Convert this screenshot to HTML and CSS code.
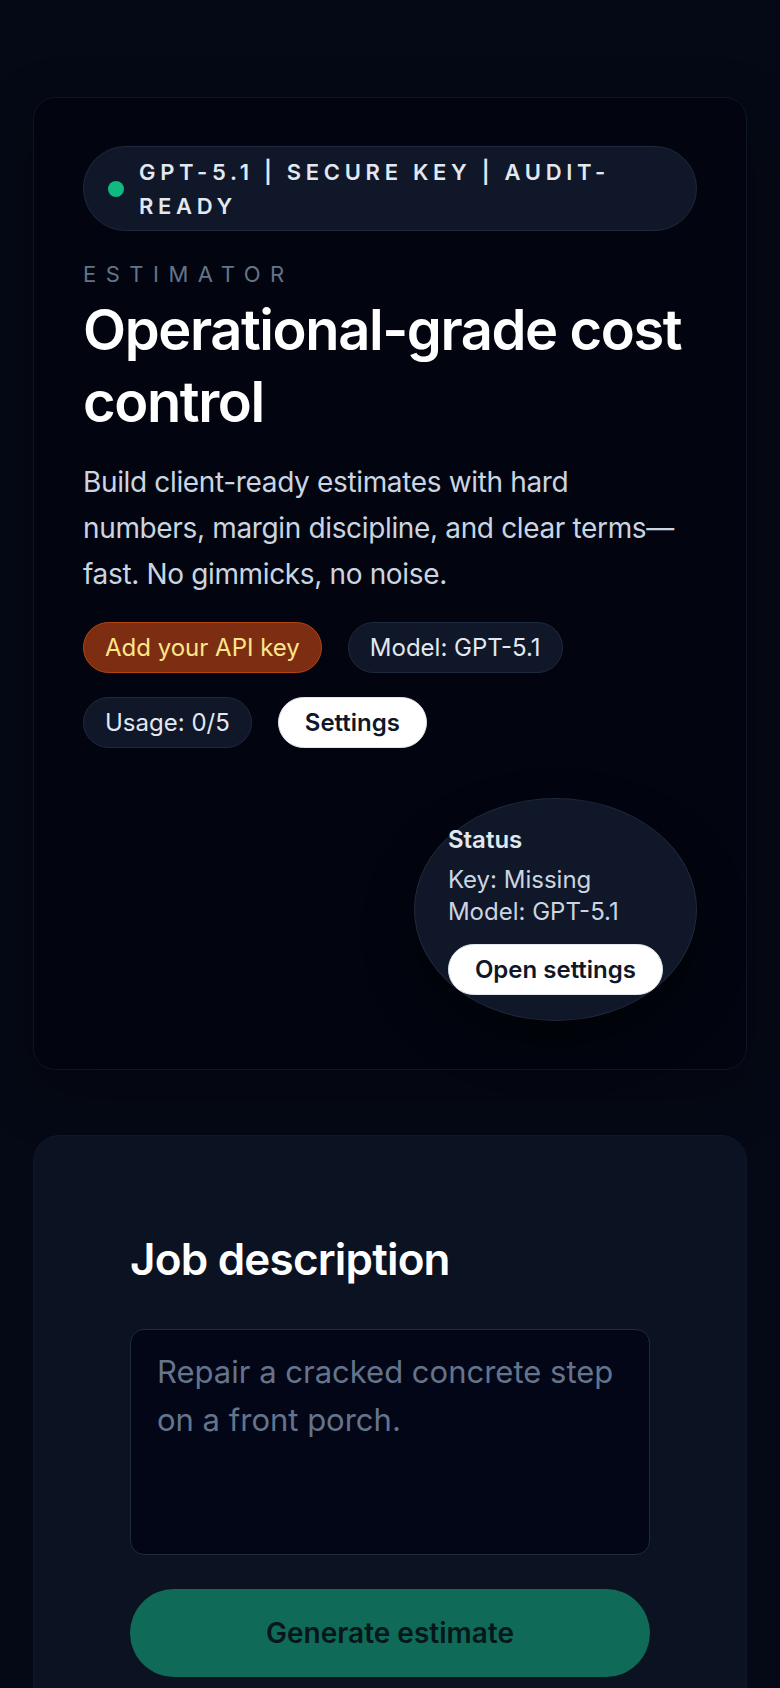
FILE: index.html
```html
<!DOCTYPE html>
<html lang="en">
<head>
    <meta charset="UTF-8">
    <meta name="viewport" content="width=device-width, initial-scale=1.0">
    <title>Estimator</title>
    <link rel="stylesheet" href="styles.css">
</head>
<body>
    <main class="page">
        <section class="hero">
            <div class="badge">
                <span class="dot"></span>
                <span class="badge-text">GPT-5.1 | Secure key | Audit-ready</span>
            </div>
            <p class="eyebrow">Estimator</p>
            <h1>Operational-grade cost control</h1>
            <p class="lead">Build client-ready estimates with hard numbers, margin discipline, and clear terms—fast. No gimmicks, no noise.</p>

            <div class="chips">
                <span class="chip chip-warn">Add your API key</span>
                <span class="chip">Model: GPT-5.1</span>
                <span class="chip">Usage: 0/5</span>
                <button class="btn-light">Settings</button>
            </div>

            <div class="status">
                <div class="status-title">Status</div>
                <div class="status-line first">Key: Missing</div>
                <div class="status-line">Model: GPT-5.1</div>
                <button class="btn-light status-btn">Open settings</button>
            </div>
        </section>

        <section class="panel">
            <h2>Job description</h2>
            <textarea id="jobDescription" placeholder="Repair a cracked concrete step on a front porch."></textarea>
            <button class="generate" disabled>Generate estimate</button>
        </section>
    </main>
</body>
</html>
```

FILE: styles.css
```css
* { box-sizing: border-box; }
body { margin: 0; background-color: #050915; color: #e2e8f0; font-family: Inter, "Noto Sans", sans-serif; }
.page { padding: 97px 33px 0; }

.hero { background-color: #02050f; border: 1px solid #0e1526; border-radius: 22px; padding: 48px 49px; box-shadow: 0 20px 60px rgba(0, 0, 0, 0.3); }

.badge { display: flex; align-items: center; gap: 15px; padding: 7.5px 24px; border: 1px solid #1f2a3c; border-radius: 999px; background-color: #0f1728; }
.dot { flex: none; width: 16px; height: 16px; border-radius: 50%; background-color: #10b981; }
.badge-text { font-size: 22px; line-height: 34px; font-weight: 600; letter-spacing: 4.7px; text-transform: uppercase; color: #e2e8f0; }

.eyebrow { margin: 27px 0 0; font-size: 22px; line-height: 32px; letter-spacing: 9.5px; text-transform: uppercase; color: #64748b; }
h1 { margin: 4px 0 0; font-size: 56px; line-height: 72px; font-weight: 600; letter-spacing: -1.4px; color: #ffffff; }
.lead { margin: 21px 0 0; font-size: 28px; line-height: 46px; letter-spacing: -0.35px; color: #cbd5e1; }

.chips { display: flex; flex-wrap: wrap; gap: 24px 26px; margin-top: 25px; }
.chip { display: inline-block; padding: 8px 21px; font-size: 24px; line-height: 33px; border: 1px solid #1f2a3c; border-radius: 999px; background-color: #0f1728; color: #e2e8f0; }
.chip-warn { background-color: #7c2d12; border-color: #b4450f; color: #fde68a; }
.btn-light { padding: 8px 26px; font-family: inherit; font-size: 24px; line-height: 33px; font-weight: 600; border: 1px solid #e2e8f0; border-radius: 999px; background-color: #ffffff; color: #0f172a; }

.status { width: fit-content; margin: 50px 0 0 auto; padding: 25px 33px; border: 1px solid #1f2a3c; border-radius: 50%; background-color: #0f1728; box-shadow: 0 24px 50px rgba(0, 0, 0, 0.45); }
.status-title { font-size: 24px; line-height: 32px; font-weight: 600; color: #e2e8f0; }
.status-line { font-size: 24px; line-height: 32px; color: #cbd5e1; }
.status-line.first { margin-top: 8px; }
.status-btn { display: block; margin-top: 16px; }

.panel { margin-top: 65px; padding: 97px 96px; background-color: #0b1222; border: 1px solid #0f1728; border-radius: 26px; }
h2 { margin: 0; font-size: 44px; line-height: 52px; font-weight: 600; letter-spacing: -0.8px; color: #ffffff; }
textarea { display: block; width: 100%; height: 226px; margin-top: 44px; padding: 18px 26px; font-family: inherit; font-size: 31px; line-height: 48px; color: #e2e8f0; background-color: #020617; border: 1px solid #1f2a3c; border-radius: 14px; resize: none; }
textarea::placeholder { color: #64748b; }
.generate { display: block; width: 100%; height: 88px; margin-top: 34px; font-family: inherit; font-size: 28px; font-weight: 600; color: #06161a; background-color: #0f6b57; border: none; border-radius: 999px; }
```
